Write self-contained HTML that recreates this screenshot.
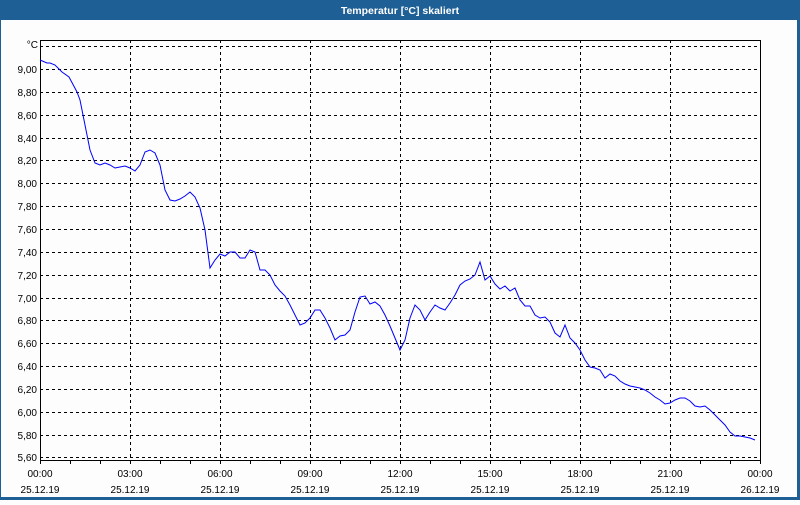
<!DOCTYPE html>
<html><head><meta charset="utf-8"><style>
body{margin:0;width:800px;height:500px;overflow:hidden;background:#fcfdfc;font-family:"Liberation Sans",sans-serif}
</style></head><body>
<svg width="800" height="500" xmlns="http://www.w3.org/2000/svg" font-family="Liberation Sans, sans-serif" font-size="10">
<rect x="0" y="0" width="800" height="500" fill="#1e6096"/>
<rect x="1" y="20" width="796" height="477" fill="#fcfdfc"/>
<text x="400" y="14" fill="#fff" font-weight="bold" font-size="10.5" text-anchor="middle">Temperatur [°C] skaliert</text>
<g stroke="#000" stroke-width="1" stroke-dasharray="3,3" fill="none" shape-rendering="crispEdges">
<path d="M40 46.5H760M40 69.5H760M40 92.5H760M40 115.5H760M40 138.5H760M40 160.5H760M40 183.5H760M40 206.5H760M40 229.5H760M40 252.5H760M40 275.5H760M40 298.5H760M40 320.5H760M40 343.5H760M40 366.5H760M40 389.5H760M40 412.5H760M40 435.5H760M40 457.5H760"/>
<path d="M130.5 40V460M220.5 40V460M310.5 40V460M400.5 40V460M490.5 40V460M580.5 40V460M670.5 40V460"/>
</g>
<g stroke="#000" fill="none" shape-rendering="crispEdges">
<rect x="40.5" y="40.5" width="720" height="420"/>
<path d="M40.5 460v4M70.5 460v4M100.5 460v4M130.5 460v4M160.5 460v4M190.5 460v4M220.5 460v4M250.5 460v4M280.5 460v4M310.5 460v4M340.5 460v4M370.5 460v4M400.5 460v4M430.5 460v4M460.5 460v4M490.5 460v4M520.5 460v4M550.5 460v4M580.5 460v4M610.5 460v4M640.5 460v4M670.5 460v4M700.5 460v4M730.5 460v4M760.5 460v4"/>
</g>
<g fill="#000" text-anchor="end">
<text x="38" y="48">°C</text>
<text x="37" y="73">9,00</text><text x="37" y="96">8,80</text><text x="37" y="119">8,60</text><text x="37" y="142">8,40</text><text x="37" y="164">8,20</text><text x="37" y="187">8,00</text><text x="37" y="210">7,80</text><text x="37" y="233">7,60</text><text x="37" y="256">7,40</text><text x="37" y="279">7,20</text><text x="37" y="302">7,00</text><text x="37" y="324">6,80</text><text x="37" y="347">6,60</text><text x="37" y="370">6,40</text><text x="37" y="393">6,20</text><text x="37" y="416">6,00</text><text x="37" y="439">5,80</text><text x="37" y="461">5,60</text>
</g>
<g fill="#000" text-anchor="middle">
<text x="40" y="477">00:00</text><text x="130" y="477">03:00</text><text x="220" y="477">06:00</text><text x="310" y="477">09:00</text><text x="400" y="477">12:00</text><text x="490" y="477">15:00</text><text x="580" y="477">18:00</text><text x="670" y="477">21:00</text><text x="760" y="477">00:00</text>
<text x="40" y="493">25.12.19</text><text x="130" y="493">25.12.19</text><text x="220" y="493">25.12.19</text><text x="310" y="493">25.12.19</text><text x="400" y="493">25.12.19</text><text x="490" y="493">25.12.19</text><text x="580" y="493">25.12.19</text><text x="670" y="493">25.12.19</text><text x="760" y="493">26.12.19</text>
</g>
<polyline fill="none" stroke="#0000ff" stroke-width="1" points="40,60 47,63 50,63 55,65 62,72 69,77 77,92 80,100 85,125 90,150 95,163 100,165 105,163 110,165 115,168 120,167 125,166 130,168 135,171 140,165 145,152 150,150 155,153 160,165 165,190 170,200 175,201 180,199 185,196 190,192 195,197 200,208 205,230 210,268 215,260 220,254 225,256 230,252 235,252 240,258 245,258 250,250 255,252 260,270 265,270 270,275 275,285 280,291 285,296 290,305 295,315 300,325 305,323 310,318 315,310 320,310 325,318 330,328 335,340 340,336 345,335 350,330 355,312 360,297 365,296 370,304 375,302 380,306 385,315 390,326 395,338 400,350 405,340 410,318 415,305 420,310 425,320 430,312 435,305 440,308 445,310 450,303 455,295 460,285 465,281 470,279 475,275 480,262 485,280 490,276 495,284 500,289 505,286 510,291 515,288 520,300 525,306 530,306 535,315 540,318 545,317 550,322 555,333 560,337 565,325 570,338 575,343 580,350 585,360 590,367 595,368 600,370 605,378 610,374 615,376 620,381 625,384 630,386 635,387 640,388 645,390 650,393 655,397 660,400 665,404 670,403 675,400 680,398 685,398 690,401 695,406 700,407 705,406 710,410 715,415 720,420 725,425 730,432 735,436 740,436 745,437 750,438 755,440"/>
</svg>
</body></html>
